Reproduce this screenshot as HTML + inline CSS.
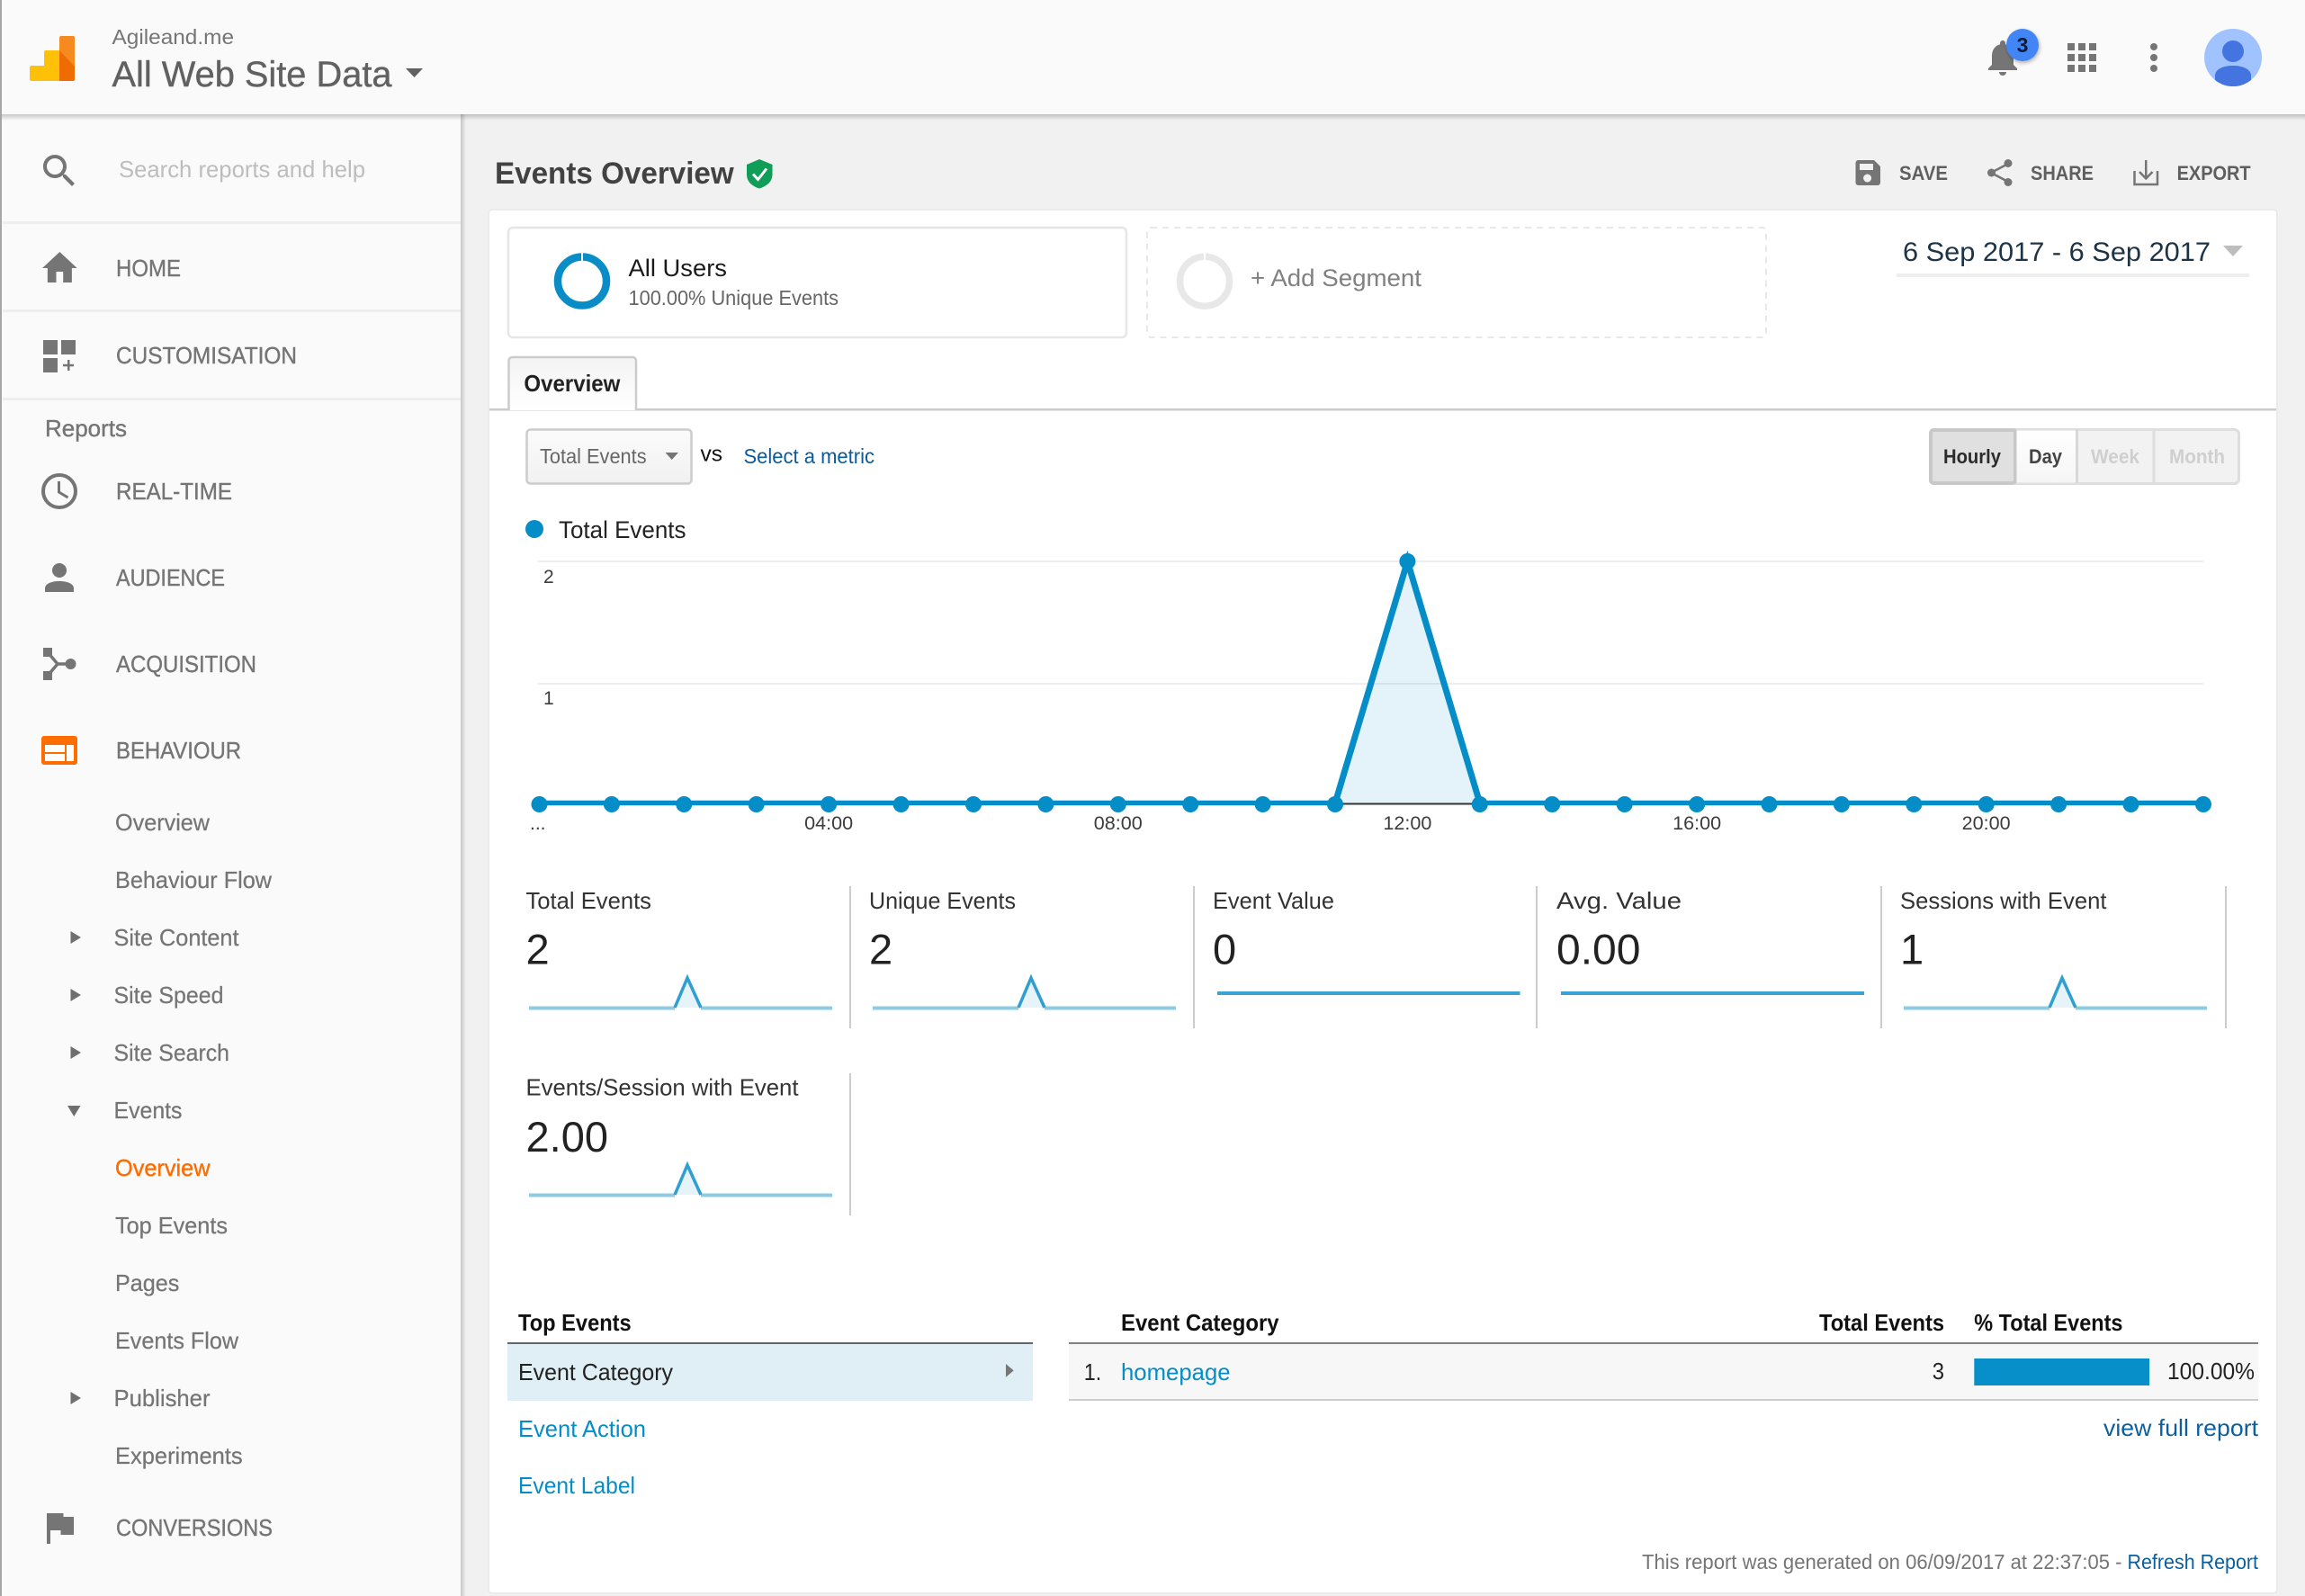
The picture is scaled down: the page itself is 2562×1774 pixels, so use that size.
<!DOCTYPE html>
<html>
<head>
<meta charset="utf-8">
<title>Events Overview</title>
<style>
html,body{margin:0;padding:0;background:#f1f1f1;width:2562px;height:1774px;overflow:hidden}
svg{display:block;font-family:"Liberation Sans",Arial,sans-serif}
text{white-space:pre}
.n{font-size:26px;fill:#757575;stroke:#757575;stroke-width:.4px}
.s{font-size:26px;fill:#757575;stroke:#757575;stroke-width:.25px}
.m{font-size:26px;fill:#333}
.v{font-size:47px;fill:#222}
.h{font-size:26px;font-weight:bold;fill:#111}
.r{font-size:26px;fill:#222}
.l{font-size:26px;fill:#058dc7}
.a{font-size:21px;fill:#3c3c3c;font-family:"Liberation Sans",Arial,sans-serif}
.t{font-size:22px;font-weight:bold;fill:#5f5f5f}
.b{font-size:22px;font-weight:bold}
</style>
</head>
<body>
<svg width="2562" height="1774" viewBox="0 0 2562 1774" xmlns="http://www.w3.org/2000/svg">
<defs>
<linearGradient id="gh" x1="0" y1="0" x2="0" y2="1"><stop offset="0" stop-color="#000" stop-opacity=".2"/><stop offset="1" stop-color="#000" stop-opacity="0"/></linearGradient>
<linearGradient id="gs" x1="0" y1="0" x2="1" y2="0"><stop offset="0" stop-color="#000" stop-opacity=".18"/><stop offset="1" stop-color="#000" stop-opacity="0"/></linearGradient>
<linearGradient id="gt" x1="0" y1="0" x2="0" y2="1"><stop offset="0" stop-color="#f3f3f3"/><stop offset="1" stop-color="#fff"/></linearGradient>
<linearGradient id="gb" x1="0" y1="0" x2="0" y2="1"><stop offset="0" stop-color="#fbfbfb"/><stop offset="1" stop-color="#f1f1f1"/></linearGradient>
<linearGradient id="gd" x1="0" y1="0" x2="0" y2="1"><stop offset="0" stop-color="#fff"/><stop offset="1" stop-color="#f5f5f5"/></linearGradient>
<clipPath id="av"><circle cx="2482" cy="64" r="32"/></clipPath>
<filter id="bs" x="-30%" y="-30%" width="160%" height="160%"><feDropShadow dx="1" dy="2" stdDeviation="2" flood-color="#000" flood-opacity=".3"/></filter>
</defs>

<rect width="2562" height="1774" fill="#f1f1f1"/>

<!-- main card -->
<rect x="543" y="233" width="1988" height="1538" rx="4" fill="#fff" stroke="#ebebeb" stroke-width="2"/>

<!-- sidebar -->
<rect x="0" y="127" width="512" height="1647" fill="#fafafa"/>
<rect x="512" y="127" width="6" height="1647" fill="url(#gs)"/>
<rect x="3" y="246" width="509" height="3" fill="#eee"/>
<rect x="3" y="344" width="509" height="3" fill="#eee"/>
<rect x="3" y="442" width="509" height="3" fill="#eee"/>

<!-- header -->
<rect x="0" y="0" width="2562" height="127" fill="#fafafa"/>
<rect x="0" y="127" width="2562" height="7" fill="url(#gh)"/>
<rect x="0" y="0" width="2" height="1774" fill="#a6a6a6"/>

<!-- logo -->
<path d="M35 73h14v17H35a2 2 0 0 1-2-2V75a2 2 0 0 1 2-2z" fill="#ffc107"/>
<path d="M51 56h15v34H49V58a2 2 0 0 1 2-2z" fill="#ffc107"/>
<path d="M68 40h13a2 2 0 0 1 2 2v46a2 2 0 0 1-2 2H66V42a2 2 0 0 1 2-2z" fill="#f58a1f"/>
<path d="M66 56l17 18v14a2 2 0 0 1-2 2H66z" fill="#ef6c00"/>

<text x="124.500" y="49" font-size="23" fill="#757575" textLength="135.500" lengthAdjust="spacingAndGlyphs">Agileand.me</text>
<text x="124.500" y="96" font-size="40" fill="#616161" stroke="#616161" stroke-width=".4" textLength="311" lengthAdjust="spacingAndGlyphs">All Web Site Data</text>
<path d="M451 76h19l-9.500 10z" fill="#616161"/>

<!-- header right icons -->
<path transform="translate(2202 40) scale(2)" d="M12 22c1.100 0 2-.9 2-2h-4c0 1.100.89 2 2 2zm6-6v-5c0-3.070-1.640-5.640-4.500-6.320V4c0-.83-.67-1.500-1.500-1.500s-1.500.67-1.500 1.500v.68C7.630 5.360 6 7.920 6 11v5l-2 2v1h16v-1l-2-2z" fill="#757575"/>
<circle cx="2248" cy="50" r="18" fill="#4285f4" filter="url(#bs)"/>
<text x="2248" y="58" font-size="23" font-weight="bold" fill="#0d1b3e" text-anchor="middle">3</text>
<g fill="#757575">
<rect x="2298" y="48" width="8" height="8"/><rect x="2310" y="48" width="8" height="8"/><rect x="2322" y="48" width="8" height="8"/>
<rect x="2298" y="60" width="8" height="8"/><rect x="2310" y="60" width="8" height="8"/><rect x="2322" y="60" width="8" height="8"/>
<rect x="2298" y="72" width="8" height="8"/><rect x="2310" y="72" width="8" height="8"/><rect x="2322" y="72" width="8" height="8"/>
<circle cx="2394" cy="52" r="4"/><circle cx="2394" cy="64" r="4"/><circle cx="2394" cy="76" r="4"/>
</g>
<circle cx="2482" cy="64" r="32" fill="#a0c3ff"/>
<g clip-path="url(#av)" fill="#4374e0">
<circle cx="2482" cy="57" r="12"/>
<path d="M2462 100V84c0-7 9-11 20-11s20 4 20 11v16z"/>
</g>

<!-- sidebar icons -->
<path transform="translate(42 166) scale(2)" d="M15.500 14h-.79l-.28-.27C15.410 12.590 16 11.110 16 9.500 16 5.910 13.090 3 9.500 3S3 5.910 3 9.500 5.910 16 9.500 16c1.610 0 3.090-.59 4.230-1.570l.27.28v.79l5 4.990L20.490 19l-4.990-5zm-6 0C7.010 14 5 11.990 5 9.500S7.010 5 9.500 5 14 7.010 14 9.500 11.990 14 9.500 14z" fill="#757575"/>
<path transform="translate(43.200 274) scale(1.930 2)" d="M10 20v-6h4v6h5v-8h3L12 3 2 12h3v8z" fill="#757575"/>
<g fill="#757575">
<rect x="48" y="378" width="16" height="16"/><rect x="68" y="378" width="16" height="16"/><rect x="48" y="398" width="16" height="16"/>
<rect x="75" y="400" width="2.500" height="12"/><rect x="70" y="404.800" width="12" height="2.500"/>
</g>
<circle cx="66" cy="546" r="18" fill="none" stroke="#757575" stroke-width="4"/>
<path d="M65.500 535v12l10 6" fill="none" stroke="#757575" stroke-width="3"/>
<circle cx="66" cy="634" r="8" fill="#757575"/>
<path d="M50 658v-4c0-5 7-8 16-8s16 3 16 8v4z" fill="#757575"/>
<g fill="#757575">
<rect x="48" y="720" width="10" height="10"/><rect x="48" y="746" width="10" height="10"/><circle cx="78.500" cy="738" r="6"/>
<path d="M53 725l11 13-11 13M64 738h14" fill="none" stroke="#757575" stroke-width="3.500"/>
</g>
<rect x="46" y="818" width="40" height="32" rx="3" fill="#ff6d00"/>
<g fill="#fff"><rect x="50" y="828" width="22" height="8"/><rect x="50" y="838" width="22" height="8"/><rect x="74" y="828" width="8" height="18"/></g>
<path d="M52 1682H70.500V1686H82V1706H67.500V1701H56V1716H52z" fill="#757575"/>
<g fill="#6f6f6f">
<path d="M78.500 1035v14l11.500-7z"/><path d="M78.500 1099v14l11.500-7z"/><path d="M78.500 1163v14l11.500-7z"/><path d="M78.500 1547v14l11.500-7z"/>
<path d="M75 1229h14.500l-7.250 12z"/>
</g>

<!-- sidebar text -->
<text x="132" y="197" font-size="26" fill="#bdbdbd" textLength="274" lengthAdjust="spacingAndGlyphs">Search reports and help</text>
<text class="n" x="129" y="307" textLength="72" lengthAdjust="spacingAndGlyphs">HOME</text>
<text class="n" x="129" y="404" textLength="201" lengthAdjust="spacingAndGlyphs">CUSTOMISATION</text>
<text class="n" x="50" y="485" textLength="91" lengthAdjust="spacingAndGlyphs">Reports</text>
<text class="n" x="129" y="555" textLength="129" lengthAdjust="spacingAndGlyphs">REAL-TIME</text>
<text class="n" x="129" y="651" textLength="121" lengthAdjust="spacingAndGlyphs">AUDIENCE</text>
<text class="n" x="129" y="747" textLength="156" lengthAdjust="spacingAndGlyphs">ACQUISITION</text>
<text class="n" x="129" y="843" textLength="139" lengthAdjust="spacingAndGlyphs">BEHAVIOUR</text>
<text class="s" x="128" y="923" textLength="105" lengthAdjust="spacingAndGlyphs">Overview</text>
<text class="s" x="128" y="987" textLength="174" lengthAdjust="spacingAndGlyphs">Behaviour Flow</text>
<text class="s" x="126.500" y="1051" textLength="139" lengthAdjust="spacingAndGlyphs">Site Content</text>
<text class="s" x="126.500" y="1115" textLength="122" lengthAdjust="spacingAndGlyphs">Site Speed</text>
<text class="s" x="126.500" y="1179" textLength="128.500" lengthAdjust="spacingAndGlyphs">Site Search</text>
<text class="s" x="126.500" y="1243" textLength="76" lengthAdjust="spacingAndGlyphs">Events</text>
<text x="128" y="1307" font-size="26" fill="#ff6d00" stroke="#ff6d00" stroke-width=".4" textLength="105.500" lengthAdjust="spacingAndGlyphs">Overview</text>
<text class="s" x="128" y="1371" textLength="125" lengthAdjust="spacingAndGlyphs">Top Events</text>
<text class="s" x="128" y="1435" textLength="71.400" lengthAdjust="spacingAndGlyphs">Pages</text>
<text class="s" x="128" y="1499" textLength="137" lengthAdjust="spacingAndGlyphs">Events Flow</text>
<text class="s" x="126.500" y="1563" textLength="107" lengthAdjust="spacingAndGlyphs">Publisher</text>
<text class="s" x="128" y="1627" textLength="141.600" lengthAdjust="spacingAndGlyphs">Experiments</text>
<text class="n" x="129" y="1707" textLength="174" lengthAdjust="spacingAndGlyphs">CONVERSIONS</text>

<!-- title bar -->
<text x="550" y="204" font-size="34" font-weight="bold" fill="#424242" textLength="265.700" lengthAdjust="spacingAndGlyphs">Events Overview</text>
<path d="M844 177L858.500 183V194C858.500 202 852 207 844 209.500C836 207 830 202 830 194V183Z" fill="#0f9d58"/>
<path d="M837 193.500L842.500 199.500L852 187.500" fill="none" stroke="#fff" stroke-width="3"/>

<path d="M2065.500 178H2083L2090 185V203a3 3 0 0 1-3 3H2065.500a3 3 0 0 1-3-3V181a3 3 0 0 1 3-3z" fill="#757575"/>
<rect x="2067" y="182" width="15" height="7" fill="#f1f1f1"/>
<circle cx="2075.600" cy="198" r="4.500" fill="#f1f1f1"/>
<text class="t" x="2111" y="200" textLength="54" lengthAdjust="spacingAndGlyphs">SAVE</text>
<path d="M2232 182L2213 192L2232 202" fill="none" stroke="#757575" stroke-width="2.500"/>
<g fill="#757575"><circle cx="2232" cy="181.500" r="4.500"/><circle cx="2213.500" cy="192" r="4.500"/><circle cx="2232" cy="202.500" r="4.500"/></g>
<text class="t" x="2257" y="200" textLength="70" lengthAdjust="spacingAndGlyphs">SHARE</text>
<path d="M2372.500 190V205H2398V190M2385.250 178V198M2378 191L2385.250 198.500L2392.500 191" fill="none" stroke="#757575" stroke-width="2.500"/>
<text class="t" x="2419.600" y="200" textLength="82" lengthAdjust="spacingAndGlyphs">EXPORT</text>

<!-- segments -->
<rect x="565" y="253" width="687" height="122" rx="5" fill="#fff" stroke="#e6e6e6" stroke-width="2.500"/>
<circle cx="647" cy="312.500" r="27" fill="none" stroke="#0a8dc7" stroke-width="8.500"/>
<rect x="646" y="280" width="2" height="13" fill="#fff"/>
<text x="698.500" y="307" font-size="27" fill="#1a1a1a" textLength="109.500" lengthAdjust="spacingAndGlyphs">All Users</text>
<text x="698.500" y="339" font-size="23" fill="#666" textLength="233.500" lengthAdjust="spacingAndGlyphs">100.00% Unique Events</text>

<rect x="1275" y="253" width="688" height="122" rx="4" fill="#fff" stroke="#e8e8e8" stroke-width="2" stroke-dasharray="7 6"/>
<circle cx="1339" cy="312.700" r="27.500" fill="none" stroke="#e8e8e8" stroke-width="7.500"/>
<rect x="1338" y="280" width="2" height="12" fill="#fff"/>
<text x="1390" y="318" font-size="27" fill="#808080" textLength="190" lengthAdjust="spacingAndGlyphs">+ Add Segment</text>

<!-- date -->
<text x="2115" y="290" font-size="30" fill="#1d3346" textLength="342" lengthAdjust="spacingAndGlyphs">6 Sep 2017 - 6 Sep 2017</text>
<path d="M2471 273h22l-11 12z" fill="#bdbdbd"/>
<rect x="2108" y="304" width="392" height="4" fill="#eee"/>

<!-- tab -->
<rect x="544" y="454" width="1986" height="2.500" fill="#ccc"/>
<path d="M565.500 456V401a4 4 0 0 1 4-4H703a4 4 0 0 1 4 4V456" fill="url(#gt)" stroke="#ccc" stroke-width="2.500"/>
<text x="582.400" y="435" font-size="26" font-weight="bold" fill="#222" textLength="107" lengthAdjust="spacingAndGlyphs">Overview</text>

<!-- metric controls -->
<rect x="585.500" y="477.500" width="183" height="60" rx="4" fill="url(#gb)" stroke="#ccc" stroke-width="2.500"/>
<text x="600" y="515" font-size="23" fill="#666" textLength="118.600" lengthAdjust="spacingAndGlyphs">Total Events</text>
<path d="M739.500 503h14.500l-7.250 8z" fill="#757575"/>
<text x="778.500" y="512.700" font-size="24" fill="#111" textLength="24.500" lengthAdjust="spacingAndGlyphs">vs</text>
<text x="826.500" y="515" font-size="23" fill="#0b5a9d" textLength="145.500" lengthAdjust="spacingAndGlyphs">Select a metric</text>

<!-- buttons -->
<rect x="2145.500" y="477.500" width="343" height="60" rx="5" fill="#f2f2f2" stroke="#dedede" stroke-width="3"/>
<rect x="2146" y="478" width="94" height="59" rx="3" fill="#e0e0e0" stroke="#c8c8c8" stroke-width="4"/>
<rect x="2241" y="478.500" width="67" height="58" fill="url(#gd)"/>
<rect x="2239" y="477" width="2.500" height="60" fill="#c8c8c8"/>
<rect x="2307" y="477" width="3" height="60" fill="#d8d8d8"/>
<rect x="2392.500" y="477" width="3" height="60" fill="#dedede"/>
<text class="b" x="2160" y="515" fill="#2b2b2b" textLength="64" lengthAdjust="spacingAndGlyphs">Hourly</text>
<text class="b" x="2255" y="515" fill="#444" textLength="37" lengthAdjust="spacingAndGlyphs">Day</text>
<text class="b" x="2324" y="515" fill="#cfcfcf" textLength="54" lengthAdjust="spacingAndGlyphs">Week</text>
<text class="b" x="2411" y="515" fill="#cfcfcf" textLength="62" lengthAdjust="spacingAndGlyphs">Month</text>

<!-- legend -->
<circle cx="594" cy="588" r="10" fill="#058dc7"/>
<text x="621" y="598" font-size="27" fill="#222" textLength="141.500" lengthAdjust="spacingAndGlyphs">Total Events</text>

<!-- chart -->
<rect x="598" y="623" width="1851" height="2" fill="#eee"/>
<rect x="598" y="759" width="1851" height="2" fill="#eee"/>
<path d="M1484 893L1564.400 624L1644.800 893Z" fill="#058dc7" fill-opacity=".11"/>
<rect x="1484" y="892.500" width="161" height="2" fill="#333"/>
<path d="M599.500 892.500H1484M1644.800 892.500H2449" fill="none" stroke="#058dc7" stroke-width="5.500"/>
<path d="M1484 892.500L1564.400 624L1644.800 892.500" fill="none" stroke="#058dc7" stroke-width="7"/>
<g fill="#058dc7">
<circle cx="599.500" cy="894" r="9"/><circle cx="679.900" cy="894" r="9"/><circle cx="760.300" cy="894" r="9"/><circle cx="840.700" cy="894" r="9"/><circle cx="921.100" cy="894" r="9"/><circle cx="1001.600" cy="894" r="9"/><circle cx="1082" cy="894" r="9"/><circle cx="1162.400" cy="894" r="9"/><circle cx="1242.800" cy="894" r="9"/><circle cx="1323.200" cy="894" r="9"/><circle cx="1403.600" cy="894" r="9"/><circle cx="1484" cy="894" r="9"/><circle cx="1564.400" cy="624" r="9"/><circle cx="1644.800" cy="894" r="9"/><circle cx="1725.200" cy="894" r="9"/><circle cx="1805.700" cy="894" r="9"/><circle cx="1886.100" cy="894" r="9"/><circle cx="1966.500" cy="894" r="9"/><circle cx="2046.900" cy="894" r="9"/><circle cx="2127.300" cy="894" r="9"/><circle cx="2207.700" cy="894" r="9"/><circle cx="2288.100" cy="894" r="9"/><circle cx="2368.500" cy="894" r="9"/><circle cx="2449" cy="894" r="9"/>
</g>
<text class="a" x="604" y="648">2</text>
<text class="a" x="604" y="783">1</text>
<text class="a" x="589" y="922">...</text>
<text class="a" x="921.100" y="922" text-anchor="middle" textLength="54" lengthAdjust="spacingAndGlyphs">04:00</text>
<text class="a" x="1242.800" y="922" text-anchor="middle" textLength="54" lengthAdjust="spacingAndGlyphs">08:00</text>
<text class="a" x="1564.400" y="922" text-anchor="middle" textLength="54" lengthAdjust="spacingAndGlyphs">12:00</text>
<text class="a" x="1886.100" y="922" text-anchor="middle" textLength="54" lengthAdjust="spacingAndGlyphs">16:00</text>
<text class="a" x="2207.700" y="922" text-anchor="middle" textLength="54" lengthAdjust="spacingAndGlyphs">20:00</text>

<!-- metrics -->
<g fill="#ccc">
<rect x="944" y="985" width="2" height="158"/><rect x="1326" y="985" width="2" height="158"/><rect x="1707" y="985" width="2" height="158"/><rect x="2090" y="985" width="2" height="158"/><rect x="2473" y="985" width="2" height="158"/><rect x="944" y="1193" width="2" height="158"/>
</g>
<text class="m" x="584.500" y="1010" textLength="139.500" lengthAdjust="spacingAndGlyphs">Total Events</text>
<text class="v" x="584.500" y="1071.700">2</text>
<text class="m" x="966" y="1010" textLength="163" lengthAdjust="spacingAndGlyphs">Unique Events</text>
<text class="v" x="966" y="1071.700">2</text>
<text class="m" x="1348" y="1010" textLength="135" lengthAdjust="spacingAndGlyphs">Event Value</text>
<text class="v" x="1348" y="1071.700">0</text>
<text class="m" x="1730" y="1010" textLength="139" lengthAdjust="spacingAndGlyphs">Avg. Value</text>
<text class="v" x="1730" y="1071.700" textLength="93.500" lengthAdjust="spacingAndGlyphs">0.00</text>
<text class="m" x="2112" y="1010" textLength="229.500" lengthAdjust="spacingAndGlyphs">Sessions with Event</text>
<text class="v" x="2112" y="1071.700">1</text>
<text class="m" x="584.500" y="1217.500" textLength="303" lengthAdjust="spacingAndGlyphs">Events/Session with Event</text>
<text class="v" x="584.500" y="1280" textLength="91.500" lengthAdjust="spacingAndGlyphs">2.00</text>

<!-- sparklines -->
<g>
<path d="M749.500 1120L764 1087L779.500 1120Z" fill="#058dc7" fill-opacity=".1"/>
<path d="M588 1120.500H750M779 1120.500H925" fill="none" stroke="#8ccbe6" stroke-width="4"/>
<path d="M750 1120L764 1087L779 1120" fill="none" stroke="#2f9fd2" stroke-width="3.500"/>
</g>
<g transform="translate(382 0)">
<path d="M749.500 1120L764 1087L779.500 1120Z" fill="#058dc7" fill-opacity=".1"/>
<path d="M588 1120.500H750M779 1120.500H925" fill="none" stroke="#8ccbe6" stroke-width="4"/>
<path d="M750 1120L764 1087L779 1120" fill="none" stroke="#2f9fd2" stroke-width="3.500"/>
</g>
<g transform="translate(1528 0)">
<path d="M749.500 1120L764 1087L779.500 1120Z" fill="#058dc7" fill-opacity=".1"/>
<path d="M588 1120.500H750M779 1120.500H925" fill="none" stroke="#8ccbe6" stroke-width="4"/>
<path d="M750 1120L764 1087L779 1120" fill="none" stroke="#2f9fd2" stroke-width="3.500"/>
</g>
<g transform="translate(0 208)">
<path d="M749.500 1120L764 1087L779.500 1120Z" fill="#058dc7" fill-opacity=".1"/>
<path d="M588 1120.500H750M779 1120.500H925" fill="none" stroke="#8ccbe6" stroke-width="4"/>
<path d="M750 1120L764 1087L779 1120" fill="none" stroke="#2f9fd2" stroke-width="3.500"/>
</g>
<rect x="1353" y="1102" width="336.500" height="4" fill="#3aa3d4"/>
<rect x="1735" y="1102" width="337" height="4" fill="#3aa3d4"/>

<!-- left table -->
<text class="h" x="576" y="1479" textLength="125.700" lengthAdjust="spacingAndGlyphs">Top Events</text>
<rect x="564" y="1492" width="584" height="2" fill="#666"/>
<rect x="564" y="1494" width="584" height="63" fill="#e0eef5"/>
<text class="r" x="576" y="1534" textLength="172" lengthAdjust="spacingAndGlyphs">Event Category</text>
<path d="M1118 1516l8.700 7.400-8.700 7.400z" fill="#777"/>
<text class="l" x="576" y="1597" textLength="142" lengthAdjust="spacingAndGlyphs">Event Action</text>
<text class="l" x="576" y="1660" textLength="130" lengthAdjust="spacingAndGlyphs">Event Label</text>

<!-- right table -->
<text class="h" x="1246" y="1479" textLength="175.600" lengthAdjust="spacingAndGlyphs">Event Category</text>
<text class="h" x="2022" y="1479" textLength="139" lengthAdjust="spacingAndGlyphs">Total Events</text>
<text class="h" x="2194.300" y="1479" textLength="165.200" lengthAdjust="spacingAndGlyphs">% Total Events</text>
<rect x="1188" y="1492" width="1322" height="2" fill="#808080"/>
<rect x="1188" y="1494" width="1322" height="61" fill="#f7f7f7"/>
<rect x="1188" y="1555" width="1322" height="2" fill="#ccc"/>
<text class="r" x="1204.800" y="1534" textLength="19.500" lengthAdjust="spacingAndGlyphs">1.</text>
<text class="l" x="1246" y="1534" textLength="121.600" lengthAdjust="spacingAndGlyphs">homepage</text>
<text class="r" x="2147.700" y="1533" textLength="13.300" lengthAdjust="spacingAndGlyphs">3</text>
<rect x="2194.300" y="1510" width="194.700" height="30" fill="#068fc8"/>
<text class="r" x="2409" y="1533" textLength="97" lengthAdjust="spacingAndGlyphs">100.00%</text>
<text x="2338" y="1596" font-size="26" fill="#0b5f9e" textLength="172" lengthAdjust="spacingAndGlyphs">view full report</text>

<!-- footer -->
<text x="1825" y="1744" font-size="23" fill="#757575" textLength="533.500" lengthAdjust="spacingAndGlyphs">This report was generated on 06/09/2017 at 22:37:05 -</text>
<text x="2364.500" y="1744" font-size="23" fill="#0b5f9e" textLength="145.500" lengthAdjust="spacingAndGlyphs">Refresh Report</text>
</svg>
</body>
</html>
